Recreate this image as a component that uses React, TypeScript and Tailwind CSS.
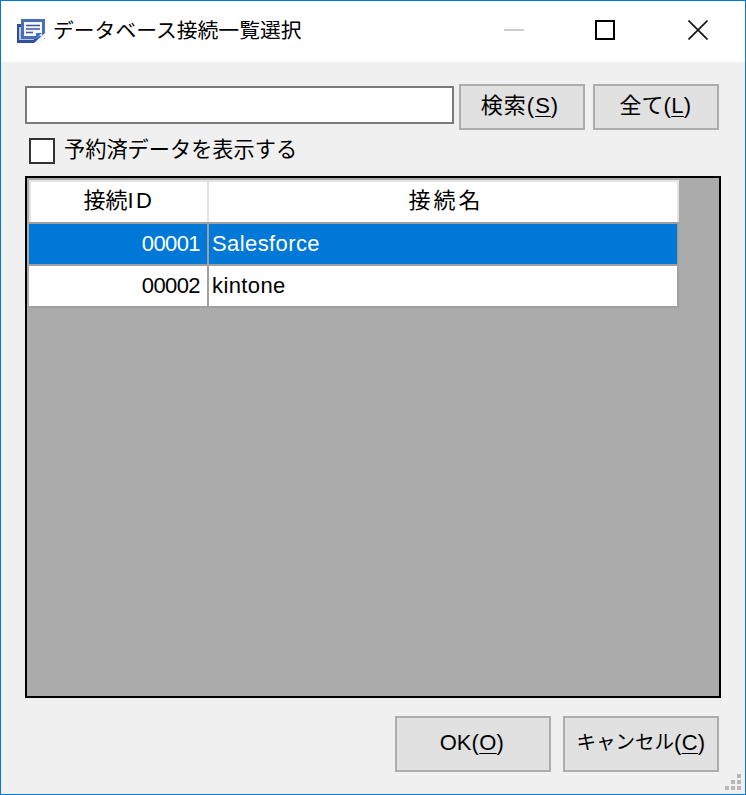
const font = "font-['Liberation_Sans','Noto_Sans_CJK_JP',sans-serif]";

function Btn({ w, h, children }: { w: string; h: string; children: React.ReactNode }) {
  return (
    <div className={`${w} ${h} flex items-center justify-center border-2 border-[#adadad] bg-[#e1e1e1] pb-[2px] text-[22px] leading-none text-black`}>
      {children}
    </div>
  );
}

function Key({ c, tight }: { c: string; tight?: boolean }) {
  return (
    <span className={tight ? "tracking-[0.3px]" : "tracking-[1px]"}>
      (<span className="underline decoration-1 underline-offset-[3px]">{c}</span>)
    </span>
  );
}

export default function App() {
  return (
    <div className={`relative flex h-[795px] w-[746px] flex-col border border-[#0078d7] bg-[#f0f0f0] ${font}`}>
      <div className="flex h-[61px] items-center bg-white pl-[16px]">
        <svg width="28" height="24" viewBox="0 0 28 24" className="mb-[1px] shrink-0">
          <rect x="0" y="5" width="21" height="19" fill="#2f4f96" />
          <rect x="2" y="8" width="15" height="13" fill="#b9c6e2" />
          <rect x="4" y="0" width="24" height="20" fill="#4a6fb5" />
          <rect x="7" y="3" width="18" height="14" fill="#f5f7fc" />
          <path d="M9 6.5h14M9 10h14M9 13.5h7" stroke="#3a5aa0" strokeWidth="1.7" />
          <path d="M17 24 L28 14 V19 L23 24 Z" fill="#f0f3fa" />
          <path d="M19 14h6l-6 6z" fill="#3d7ad0" />
        </svg>
        <span className="ml-[8px] text-[20.8px] leading-none text-black">データベース接続一覧選択</span>
        <div className="mb-[3px] ml-auto flex items-center pr-[37px]">
          <div className="h-[2px] w-[20px] bg-[#cccccc]" />
          <div className="ml-[71px] h-[20px] w-[20px] border-2 border-black" />
          <svg width="20" height="20" viewBox="0 0 20 20" className="ml-[73px]">
            <path d="M0.5 0.5 L19.5 19.5 M19.5 0.5 L0.5 19.5" stroke="#111" strokeWidth="1.6" />
          </svg>
        </div>
      </div>
      <div className="flex min-h-0 flex-1 flex-col px-[24px] pt-[22px]">
        <div className="flex items-start">
          <div className="mt-[2px] h-[38px] w-[429px] border-2 border-[#7a7a7a] bg-white" />
          <Btn w="ml-[5px] w-[126px]" h="h-[46px]">
            <span className="mr-[4px] flex">
              <span className="tracking-[1px]">検索</span>
              <Key c="S" />
            </span>
          </Btn>
          <Btn w="ml-[8px] w-[126px]" h="h-[46px]">
            <span className="mr-[1px] flex">全て<Key c="L" tight /></span>
          </Btn>
        </div>
        <div className="mt-[8px] flex h-[26px] items-center pl-[4px]">
          <div className="h-[26px] w-[26px] border-2 border-[#333] bg-white" />
          <span className="mb-[2px] ml-[9px] text-[21.2px] leading-none text-black">予約済データを表示する</span>
        </div>
        <div className="mt-[12px] h-[522px] w-[696px] border-2 border-black bg-[#ababab] pl-[2px] pt-[2px]">
          <div className="w-[650px] text-[22px] leading-none">
            <div className="flex h-[42px] border-x-2 border-t-2 border-[#e3e3e3] bg-white pb-[2px] text-black">
              <div className="-mb-[2px] flex w-[178px] items-center justify-center border-r-2 border-[#e3e3e3] pb-[2px]">
                接続<span className="tracking-[2.5px]">ID</span>
              </div>
              <div className="flex flex-1 items-center justify-center pl-[6px] tracking-[3px]">接続名</div>
            </div>
            <div className="h-[2px] bg-[#a0a0a0]" />
            <div className="flex h-[40px] border-r-2 border-[#a0a0a0] bg-[#0078d7] text-white">
              <div className="flex w-[180px] items-center justify-end border-r-2 border-[#a0a0a0] pr-[7px] tracking-[-0.6px]">00001</div>
              <div className="flex flex-1 items-center pl-[3px] tracking-[0.4px]">Salesforce</div>
            </div>
            <div className="h-[2px] bg-[#a0a0a0]" />
            <div className="flex h-[40px] border-r-2 border-[#a0a0a0] bg-white text-black">
              <div className="flex w-[180px] items-center justify-end border-r-2 border-[#a0a0a0] pr-[7px] tracking-[-0.6px]">00002</div>
              <div className="flex flex-1 items-center pl-[3px] tracking-[0.4px]">kintone</div>
            </div>
            <div className="h-[2px] bg-[#a0a0a0]" />
          </div>
        </div>
        <div className="mt-[18px] flex justify-end pr-[2px]">
          <Btn w="w-[156px]" h="h-[56px]">
            <span className="mr-[2px] flex">OK<Key c="O" tight /></span>
          </Btn>
          <Btn w="ml-[12px] w-[156px]" h="h-[56px]">
            <span className="flex items-center">
              <span className="text-[19.5px]">キャンセル</span>
              <Key c="C" tight />
            </span>
          </Btn>
        </div>
      </div>
      <svg width="16" height="16" viewBox="0 0 16 16" className="absolute bottom-[4px] right-[4px]">
        <g fill="#b8b8b8">
          <rect x="12" y="0" width="4" height="4" />
          <rect x="6" y="6" width="4" height="4" />
          <rect x="12" y="6" width="4" height="4" />
          <rect x="0" y="12" width="4" height="4" />
          <rect x="6" y="12" width="4" height="4" />
          <rect x="12" y="12" width="4" height="4" />
        </g>
      </svg>
    </div>
  );
}
